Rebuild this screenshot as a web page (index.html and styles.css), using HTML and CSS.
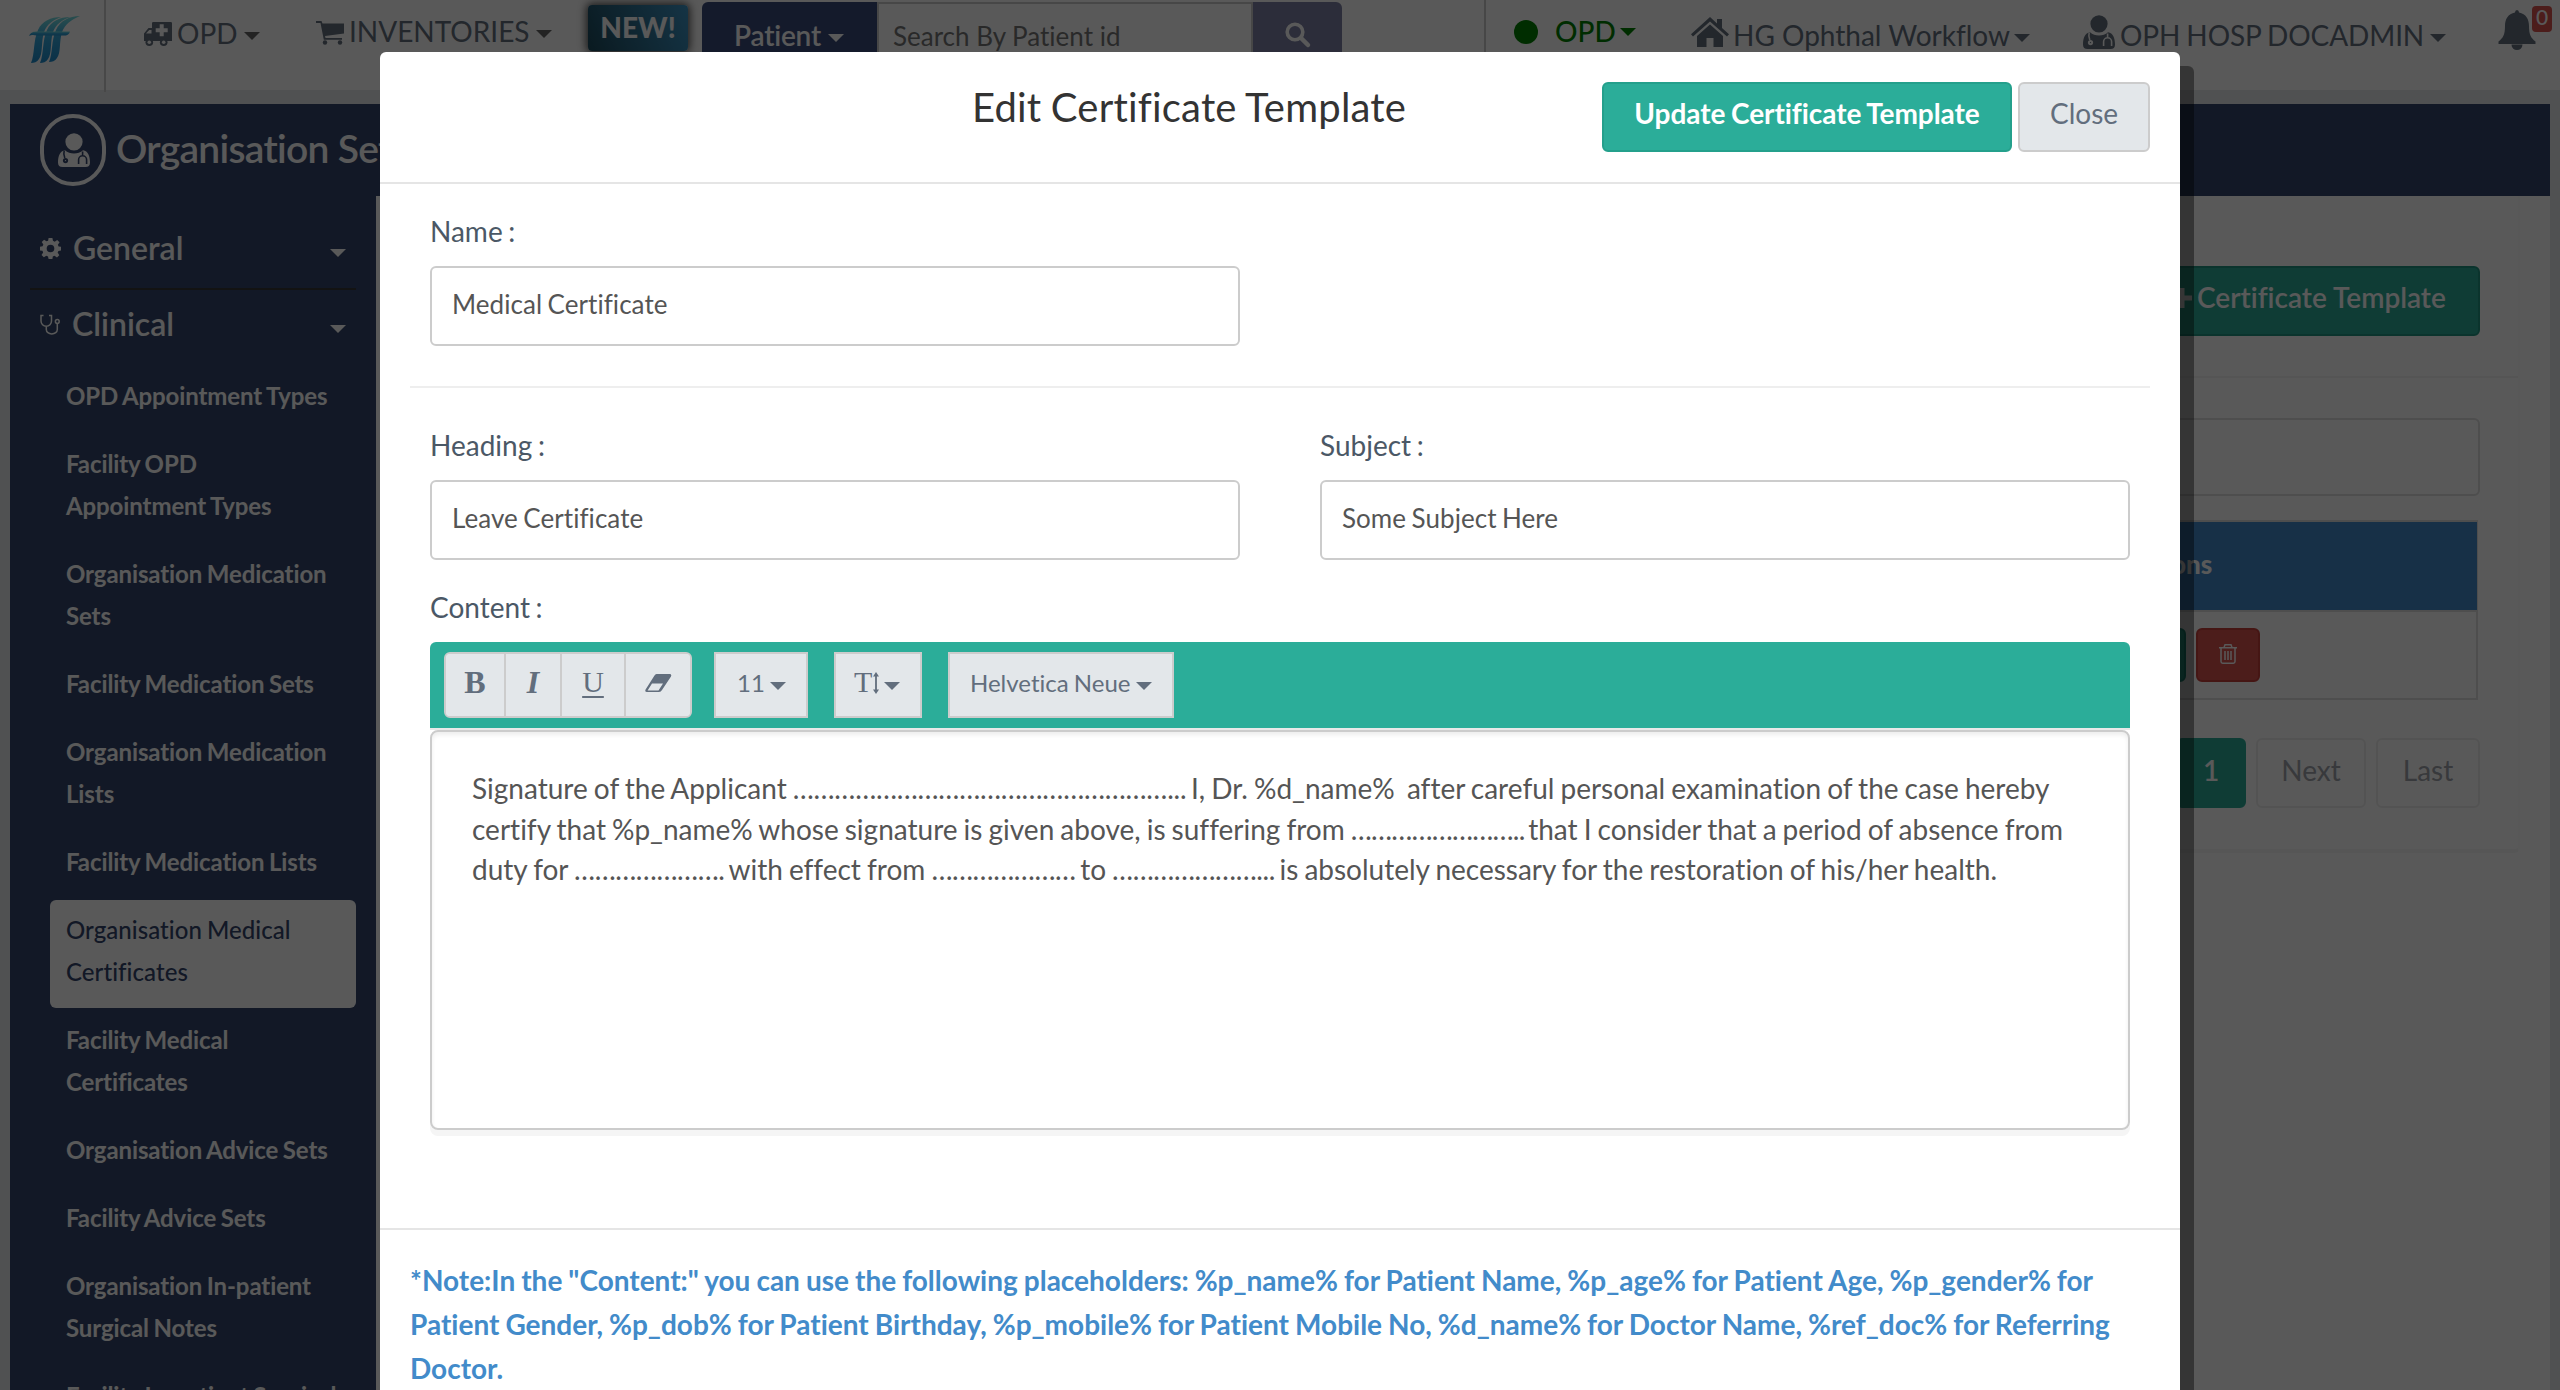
FILE: index.html
```html
<!DOCTYPE html>
<html lang="en">
<head>
<meta charset="utf-8">
<title>Edit Certificate Template</title>
<link rel="stylesheet" href="styles.css">
</head>
<body>
<svg class="defs" width="0" height="0">
  <symbol id="doctor" viewBox="0 0 32 34">
    <circle cx="16" cy="8.8" r="8.6"/>
    <path fill-rule="evenodd" d="M7 17.200C2 18 0 23 0 29.500Q0 34 4.500 34h23Q32 34 32 29.500C32 23 30 18 25 17.200C22.500 19.500 19.500 20.500 16 20.500S9.500 19.500 7 17.200z"/>
    <path class="cut" d="M6.200 17.500C5.400 20 5.800 22 6.800 25M24.600 18.500v4.300M20.600 31v-4.200a4 4 0 0 1 8 0V31"/>
    <circle class="cut-dot" cx="7.500" cy="27.600" r="2.600"/>
    <circle cx="7.500" cy="27.600" r="0.700"/>
  </symbol>
</svg>

<div class="app">
  <header class="topbar">
    <div class="logo">
      <svg width="52" height="48" viewBox="0 0 52 48">
        <defs><linearGradient id="lg" x1="0" y1="0" x2="0" y2="1"><stop offset="0" stop-color="#78dfe0"/><stop offset=".45" stop-color="#35a8dc"/><stop offset="1" stop-color="#1f8ccc"/></linearGradient></defs>
        <g fill="url(#lg)">
          <path d="M2 47C6 38 4 25 9 14C13 5 22 1 32 1C24 4 18 8 15 16C12 26 14 38 10 43C8 46 5 47 2 47z"/>
          <path d="M11 47C15 38 13 25 18 14C22 5 31 1 41 1C33 4 27 8 24 16C21 26 23 38 19 43C17 46 14 47 11 47z"/>
          <path d="M20 46C24 37 22 25 27 14C31 5 40 0 51 0C42 4 36 8 33 16C30 26 32 37 28 42C26 45 23 46 20 46z"/>
          <path d="M0 20C3 14 8 16 14 15.500H41C40 19 37 20 33 19.500H8C4 18.500 2 19 0 20z"/>
        </g>
      </svg>
    </div>
    <div class="nav opd">
      <svg width="30" height="24" viewBox="0 0 30 24"><path d="M9 1.200Q9 0 10.200 0H27.800Q29 0 29 1.200V19H1V11.500L5.500 6H9z"/><path class="bg" d="M3 11.500L6.200 8H8.500V11.500zM16.700 2.300h4v4h4v4h-4v4h-4v-4h-4v-4h4z"/><circle cx="6.300" cy="20.200" r="3.800"/><circle cx="20.700" cy="20.200" r="3.800"/><circle class="bg" cx="6.300" cy="20.200" r="1.800"/><circle class="bg" cx="20.700" cy="20.200" r="1.800"/></svg>
      <span>OPD</span><i class="caret"></i>
    </div>
    <div class="nav inv">
      <svg width="30" height="24" viewBox="0 0 30 24"><path d="M0 0H5.500L6.500 2.500H28V12.500L9 15L9.500 17H26V18.800H7.800L4.500 2H0z"/><circle cx="9" cy="21.500" r="2.200"/><circle cx="24" cy="21.500" r="2.200"/></svg>
      <span>INVENTORIES</span><i class="caret"></i>
    </div>
    <div class="new">NEW!</div>
    <div class="search">
      <div class="patient"><span>Patient</span><i class="caret"></i></div>
      <div class="field">Search By Patient id</div>
      <div class="go"><svg class="line" width="28" height="28" viewBox="0 0 28 28"><circle cx="11" cy="11" r="7.800" stroke-width="3.600"/><path stroke-width="4.500" stroke-linecap="round" d="M17.500 17.500L24 24"/></svg></div>
    </div>
    <div class="right">
      <div class="nav status"><i class="dot"></i><span>OPD</span><i class="caret"></i></div>
      <div class="nav facility">
        <svg width="38" height="30" viewBox="0 0 38 30"><path d="M19 0L26 6.400V2h5v9L38 17.200L36 19.500L19 4.600L2 19.500L0 17.200z"/><path d="M19 7.500L32 19V30H22.500V21H15.500V30H6V19z"/></svg>
        <span>HG Ophthal Workflow</span><i class="caret"></i>
      </div>
      <div class="nav user"><svg width="32" height="34"><use href="#doctor"/></svg><span>OPH HOSP DOCADMIN</span><i class="caret"></i></div>
      <div class="bell">
        <svg width="38" height="40" viewBox="0 0 38 40"><path d="M19 0q2 0 2 2.500C28 4 31 9 31 16c0 9 2 12 6.500 15.500V34H.5V31.500C5 28 7 25 7 16C7 9 10 4 17 2.500Q17 0 19 0z"/><path d="M13.500 34.500a5.500 5.500 0 0 0 11 0z"/></svg>
        <b>0</b>
      </div>
    </div>
  </header>

  <div class="banner">
    <div class="ring"><svg width="32" height="34"><use href="#doctor"/></svg></div>
    <h1>Organisation Settings</h1>
  </div>

  <div class="columns">
    <nav class="sidebar">
      <div class="section"><svg width="21" height="21" viewBox="0 0 22 22"><path fill-rule="evenodd" d="M9 0h4l.6 3 1.800.8L18 2l2.500 2.500L18.700 7l.8 2L22 9.200v3.800l-2.700.500-.8 1.800L20.200 18 17.800 20.300 15.200 18.600l-1.800.8L13 22H9l-.6-2.700-1.800-.8L4 20.200 1.600 17.800 3.300 15.200l-.7-1.800L0 13V9.200l2.700-.6.800-1.800L1.800 4.300 4.300 1.800 6.800 3.500l1.700-.7zM11 7a4 4 0 1 0 0 8a4 4 0 0 0 0-8z"/></svg><span>General</span><i class="caret"></i></div>
      <div class="section clinical"><svg class="line" width="20" height="21" viewBox="0 0 20 21" stroke-width="1.500"><path d="M3.500 1.500H1V7a5 5 0 0 0 10.500 0V1.500H9M6.300 12v3.500a5.500 4.500 0 0 0 11 0V9.500"/><circle cx="17.300" cy="7.500" r="1.900"/></svg><span>Clinical</span><i class="caret"></i></div>
      <ul>
        <li>OPD Appointment Types</li>
        <li>Facility OPD<br>Appointment Types</li>
        <li>Organisation Medication<br>Sets</li>
        <li>Facility Medication Sets</li>
        <li>Organisation Medication<br>Lists</li>
        <li>Facility Medication Lists</li>
        <li class="active">Organisation Medical<br>Certificates</li>
        <li>Facility Medical<br>Certificates</li>
        <li>Organisation Advice Sets</li>
        <li>Facility Advice Sets</li>
        <li>Organisation In-patient<br>Surgical Notes</li>
        <li>Facility In-patient Surgical<br>Notes</li>
      </ul>
    </nav>
    <main class="content">
      <section class="panel">
        <div class="panel-head"><div class="add"><svg width="20" height="20" viewBox="0 0 20 20"><path d="M7.500 0h5v7.500H20v5h-7.500V20h-5v-7.500H0v-5h7.500z"/></svg><span>Certificate Template</span></div></div>
        <div class="panel-body">
          <div class="filter"></div>
          <div class="table">
            <div class="thead">Actions</div>
            <div class="trow"><div class="edit"></div><div class="trash"><svg class="line" width="18" height="20" viewBox="0 0 18 20" stroke-width="1.500"><path d="M0 3.800H18M5 3.500L6 .8h6l1 2.700M2 4V17.500q0 1.700 1.700 1.700H14.300q1.700 0 1.700-1.700V4M6 7v9M9 7v9M12 7v9"/></svg></div></div>
          </div>
          <div class="pager"><span class="page on">1</span><span class="page next">Next</span><span class="page last">Last</span></div>
        </div>
      </section>
    </main>
  </div>
</div>

<div class="backdrop"></div>

<div class="modal">
  <div class="modal-head">
    <h2>Edit Certificate Template</h2>
    <div class="actions"><button class="btn primary">Update Certificate Template</button><button class="btn">Close</button></div>
  </div>
  <div class="modal-body">
    <div class="row">
      <div class="group"><label>Name :</label><div class="input">Medical Certificate</div></div>
    </div>
    <hr>
    <div class="row">
      <div class="group"><label>Heading :</label><div class="input">Leave Certificate</div></div>
      <div class="group"><label>Subject :</label><div class="input">Some Subject Here</div></div>
    </div>
    <div class="row content-row">
      <div class="group wide">
        <label>Content :</label>
        <div class="toolbar">
          <div class="tools">
            <span class="tool b">B</span><span class="tool i">I</span><span class="tool u">U</span>
            <span class="tool e"><svg width="27" height="18" viewBox="0 0 27 18"><path fill-rule="evenodd" d="M11.500 0H24.500Q27 0 26 2.500L17 16Q16 18 14 18H2Q-.5 18 .6 15.500L9.500 1.500Q10.300 0 11.500 0zM7 9.500L2.600 16.400H13.500L18 9.500z"/></svg></span>
          </div>
          <div class="tool size">11<i class="caret"></i></div>
          <div class="tool height"><span>T</span><svg width="6" height="22" viewBox="0 0 6 22"><path d="M3 0L6 4.500H3.900V17.500H6L3 22L0 17.500H2.100V4.500H0z"/></svg><i class="caret"></i></div>
          <div class="tool face">Helvetica Neue<i class="caret"></i></div>
        </div>
        <div class="editor"><p>Signature of the Applicant <span class="blank long">………………………………………………...</span> I, Dr. %d_name%&nbsp; after careful personal examination of the case hereby<br>certify that %p_name% whose signature is given above, is suffering from <span class="blank mid">……………………..</span> that I consider that a period of absence from<br>duty for <span class="blank">………………….</span> with effect from <span class="blank">…………………</span> to <span class="blank">…………………...</span> is absolutely necessary for the restoration of his/her health.</p></div>
      </div>
    </div>
  </div>
  <div class="modal-foot">*Note:In the "Content:" you can use the following placeholders: %p_name% for Patient Name, %p_age% for Patient Age, %p_gender% for<br>Patient Gender, %p_dob% for Patient Birthday, %p_mobile% for Patient Mobile No, %d_name% for Doctor Name, %ref_doc% for Referring<br>Doctor.</div>
</div>
</body>
</html>
```

FILE: styles.css
```css
* { box-sizing: border-box; }
body { margin: 0; width: 2560px; height: 1390px; overflow: hidden; position: relative; background: #e6e9ec; font-family: Lato, sans-serif; font-size: 28px; font-variant-ligatures: none; color: #64707f; }
.defs { position: absolute; }
svg { display: block; flex: none; fill: currentColor; }
.line { fill: none; stroke: #fff; }
.caret { flex: none; width: 0; height: 0; border: 8px solid transparent; border-top-color: currentColor; border-bottom: 0; }
.cut { fill: none; stroke: var(--cut); stroke-width: 1.6; }
.cut-dot, .bg { fill: var(--cut); }

.app { height: 1390px; overflow: hidden; display: flex; flex-direction: column; }

/* top bar */
.topbar { --cut: #fff; height: 90px; flex: none; background: #fff; display: flex; align-items: flex-start; }
.logo { width: 106px; height: 92px; flex: none; border-right: 2px solid #cfcfcf; padding: 16px 0 0 29px; }
.nav { display: flex; line-height: 40px; white-space: nowrap; flex: none; }
.nav .caret { margin-top: 19px; }
.opd { margin-left: 37px; padding-top: 13px; width: 173px; }
.opd svg { margin: 9px 4px 0 0; }
.opd span { width: 67px; }
.opd .caret, .inv .caret { color: #666; }
.inv { padding-top: 11px; width: 272px; }
.inv svg { margin: 10px 3px 0 0; }
.inv span { width: 187px; }
.new { width: 100px; height: 46px; margin-top: 5px; border-radius: 4px; background: linear-gradient(65deg, #1d4a5c, #3d95c6); box-shadow: 0 0 8px 2px #555; color: #fff; font-weight: 900; line-height: 45px; text-align: center; }
.search { display: flex; margin: 2px 0 0 14px; height: 62px; }
.patient { width: 175px; background: #3b4c7d; color: #fff; border-radius: 6px 0 0 6px; display: flex; padding: 13px 0 0 32px; line-height: 40px; font-weight: 600; letter-spacing: -.2px; }
.patient .caret { margin: 19px 0 0 7px; }
.field { width: 376px; border: 2px solid #ccc; padding: 12px 0 0 14px; font-size: 26px; line-height: 40px; color: #777; }
.go { width: 89px; background: #7e81a6; padding: 19px 0 0 31px; border-radius: 0 6px 6px 0; }
.right { margin-left: auto; width: 1076px; height: 90px; border-left: 2px solid #ccc; display: flex; }
.status { color: #008000; padding: 11px 0 0 28px; width: 205px; font-weight: 500; }
.dot { width: 24px; height: 24px; border-radius: 50%; background: #008000; margin: 9px 17px 0 0; }
.status .caret { margin: 17px 0 0 4px; }
.facility { padding-top: 15px; width: 392px; }
.facility svg { margin: 2px 4px 0 0; }
.facility .caret { margin-left: 4px; }
.user { padding-top: 15px; width: 415px; letter-spacing: -.1px; word-spacing: -1px; }
.user svg { margin: 0 5px 0 0; }
.user .caret { margin-left: 6px; }
.bell { padding: 10px 0 0; display: flex; }
.bell b { width: 20px; height: 26px; margin: -4px 0 0 -4px; border-radius: 4px; background: #d9534f; color: #fff; font-size: 21px; font-weight: 500; line-height: 22px; text-align: center; }

/* banner */
.banner { --cut: #36476d; background: #36476d; color: #fff; margin: 14px 10px 0; height: 92px; flex: none; display: flex; align-items: flex-start; padding: 10px 0 0 30px; }
.ring { width: 66px; height: 72px; border: 4px solid #fff; border-radius: 34px; padding: 15px 0 0 14px; }
.banner h1 { margin: 0 0 0 10px; font-size: 39px; font-weight: 600; letter-spacing: -.7px; line-height: 60px; padding-top: 4px; }

.columns { display: flex; margin: 0 10px; height: 1194px; flex: none; }
.sidebar { width: 366px; flex: none; background: #36476d; color: #fff; padding: 12px 20px 0; }
.section { height: 82px; border-bottom: 2px solid #373737; display: flex; padding: 20px 10px 0; font-size: 32px; font-weight: 600; line-height: 40px; }
.section svg { margin-top: 10px; }
.section span { margin-left: 12px; }
.section .caret { margin: 21px 0 0 auto; }
.section.clinical { border: 0; padding-top: 14px; height: 76px; }
.sidebar ul { list-style: none; margin: 0; padding: 0 0 0 20px; }
.sidebar li { padding: 9px 0 15px 16px; margin-bottom: 2px; font-size: 24px; line-height: 42px; border-radius: 6px; font-weight: 700; letter-spacing: -.1px; word-spacing: -1.2px; white-space: nowrap; }
.sidebar li.active { background: #fff; color: #36476d; font-weight: 500; letter-spacing: .06px; }

/* page content */
.content { flex: 1; background: #fff; padding: 0 30px 0 20px; }
.panel { border-right: 2px solid #fbfbfb; border-bottom: 4px solid #f5f5f5; border-radius: 0 0 6px; height: 657px; }
.panel-head { height: 182px; border-bottom: 2px solid #f2f2f2; padding: 70px 38px 0 0; display: flex; justify-content: flex-end; }
.add { height: 70px; width: 340px; background: #2bad99; border: 2px solid #229480; border-radius: 6px; color: #fff; display: flex; padding: 9px 0 0 30px; line-height: 40px; font-weight: 600; white-space: nowrap; }
.add svg { margin: 11px 5px 0 0; }
.panel-body { padding: 40px 38px 0; }
.filter { height: 78px; border: 2px solid #dedede; border-radius: 6px; }
.table { margin: 24px 2px 0 0; border: 2px solid #dedede; height: 180px; }
.thead { height: 88px; background: #428bca; margin-right: -1px; color: #fff; font-weight: 900; font-size: 26px; line-height: 84px; padding-left: 1688px; }
.trow { border-top: 2px solid #dedede; display: flex; justify-content: flex-end; padding: 16px 216px 0 0; gap: 10px; }
.edit, .trash { width: 64px; height: 54px; border-radius: 6px; background: #2bad99; border: 2px solid #229480; }
.trash { background: #d9534f; border-color: #c63f3b; padding: 14px 0 0 21px; }
.pager { display: flex; justify-content: flex-end; gap: 10px; margin-top: 38px; }
.page { height: 70px; border: 2px solid #eee; border-radius: 6px; text-align: center; line-height: 60px; color: #a0a4ab; }
.page.on { width: 70px; background: #2bad99; border-color: #2bad99; color: #fff; font-weight: 600; }
.page.next { width: 110px; }
.page.last { width: 104px; }

.backdrop { position: absolute; inset: 0; background: rgba(0, 0, 0, .65); }

/* dialog */
.modal { position: absolute; left: 380px; top: 52px; width: 1800px; height: 1400px; background: #fff; border-radius: 6px; box-shadow: 14px 14px 0 rgba(0, 0, 0, .4); }
.modal-head { height: 132px; border-bottom: 2px solid #e5e5e5; display: flex; justify-content: space-between; padding: 30px 30px 0 592px; }
.modal-head h2 { margin: 0; font-size: 40px; font-weight: 400; line-height: 50px; color: #333; letter-spacing: .2px; word-spacing: -1px; }
.actions { display: flex; gap: 6px; }
.btn { font: 400 28px/40px Lato, sans-serif; font-variant-ligatures: none; height: 70px; width: 132px; border: 2px solid #ccc; border-radius: 6px; background: #e3e7ea; color: #626e7d; padding: 0 0 9px; }
.btn.primary { width: 410px; background: #2bad99; border-color: #24a08c; color: #fff; font-weight: 700; letter-spacing: -.07px; word-spacing: -1px; }
.modal-body { padding: 20px 30px 0; height: 1046px; border-bottom: 2px solid #e5e5e5; }
.row { display: flex; justify-content: space-between; padding: 0 20px; }
.group { width: 810px; }
.group.wide { width: 100%; }
label { display: block; line-height: 40px; padding: 7px 0 15px; word-spacing: -1.5px; color: #4b5866; }
.input { height: 80px; border: 2px solid #ccc; border-radius: 6px; font-size: 26px; line-height: 40px; padding: 16px 20px; color: #555; letter-spacing: .05px; word-spacing: -1.2px; }
hr { margin: 40px 0 30px; border: 0; height: 2px; background: #eee; }
.content-row { padding-top: 20px; }
.toolbar { height: 86px; background: #2bad99; border-radius: 6px 6px 0 0; padding: 10px 14px; display: flex; box-shadow: 0 2px 0 #e9e9e9; }
.tools { display: flex; border: 2px solid #ccc; border-radius: 6px; overflow: hidden; height: 66px; width: 248px; background: #e3e7ea; }
.tools .tool { border: 0; border-right: 2px solid #ccc; height: 62px; font: 32px/56px "Liberation Serif", serif; justify-content: center; }
.tools .b { width: 60px; font-weight: 700; }
.tools .i { width: 56px; font-style: italic; font-weight: 700; }
.tools .u { width: 64px; font-size: 30px; text-decoration: underline; text-decoration-thickness: 2px; text-underline-offset: 4px; }
.tools .e { width: 64px; border: 0; padding-top: 20px; }
.tool { display: flex; border: 2px solid #ccc; background: #e3e7ea; color: #626e7d; height: 66px; font-size: 24px; line-height: 40px; }
.tool .caret { margin: 28px 0 0 6px; }
.size { width: 94px; margin-left: 22px; padding: 0 0 0 21px; line-height: 58px; }
.tool.size .caret { margin-left: 5px; }
.height { width: 88px; margin-left: 26px; padding-left: 18px; }
.height span { font: 30px/56px "Liberation Serif", serif; }
.height svg { margin: 18px 0 0 1px; }
.tool.height .caret { margin-left: 5px; }
.face { width: 226px; margin-left: 26px; padding-left: 20px; line-height: 58px; word-spacing: -1px; }
.tool.face .caret { margin-left: 5px; }
.editor { margin-top: 2px; height: 400px; border: 2px solid #ccc; border-radius: 8px; box-shadow: 0 6px 0 #f5f5f5, inset 0 3px 4px #eee; padding: 36px 40px; }
.editor p { margin: 0; color: #555; line-height: 40.5px; white-space: nowrap; word-spacing: -1.1px; }
.blank { margin: 0 -1.5px 0 0; letter-spacing: -.4px; }
.blank.mid { margin-right: -2.5px; letter-spacing: -.75px; }
.blank.long { letter-spacing: -.2px; }
.modal-foot { padding: 28px 30px; color: #428bca; font-weight: 700; line-height: 44px; white-space: nowrap; word-spacing: -.8px; }
```
